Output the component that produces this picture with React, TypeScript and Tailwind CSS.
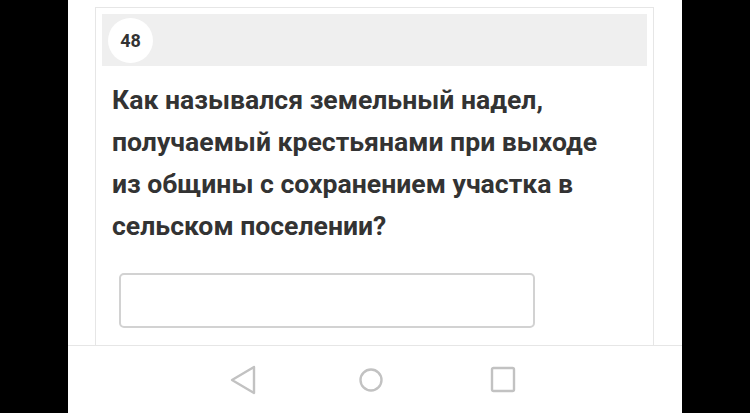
import React from 'react'

const font = { fontFamily: 'Roboto, "Noto Sans", sans-serif' }

function NavBar() {
  return (
    <div className="h-[68px] border-t border-[#e6e6e6] bg-white flex items-center">
      <svg width="30" height="32" viewBox="0 0 30 32" className="ml-[161px]" fill="none" stroke="#c2c2c2" strokeWidth="2.4" strokeLinejoin="round">
        <path d="M25 3 L3 16 L25 29 Z" />
      </svg>
      <svg width="26" height="26" viewBox="0 0 26 26" className="ml-[99px]" fill="none" stroke="#c2c2c2" strokeWidth="2.4">
        <circle cx="13" cy="13" r="10.5" />
      </svg>
      <svg width="26" height="28" viewBox="0 0 26 28" className="ml-[106px]" fill="none" stroke="#c2c2c2" strokeWidth="2.4" strokeLinejoin="round">
        <rect x="2" y="2" width="22" height="23" rx="1.5" />
      </svg>
    </div>
  )
}

export default function App() {
  return (
    <div className="flex h-[413px] w-[750px] bg-black overflow-hidden" style={font}>
      <div className="w-[68px] shrink-0" />
      <div className="w-[614px] shrink-0 bg-white flex flex-col">
        <div className="h-[345px] overflow-hidden pt-[7px] px-[27px] pr-[28px]">
          <div className="border border-[#e6e6e6] h-[400px] px-[6px] pt-[6px]">
            <div className="h-[52px] bg-[#efefef] flex items-center pl-[6px]">
              <div className="w-[45px] h-[45px] rounded-full bg-white flex items-center justify-center text-[18px] font-bold text-[#333]">
                48
              </div>
            </div>
            <div className="pl-[10px] pt-[13px] text-[26.6px] leading-[42px] font-bold text-[#333] whitespace-nowrap">
              Как назывался земельный надел,<br />
              получаемый крестьянами при выходе<br />
              из общины с сохранением участка в<br />
              сельском поселении?
            </div>
            <div className="mt-[26px] ml-[17px] w-[416px] h-[55px] rounded-[5px] border-2 border-[#d2d2d2] bg-white" />
          </div>
        </div>
        <NavBar />
      </div>
      <div className="flex-1" />
    </div>
  )
}
